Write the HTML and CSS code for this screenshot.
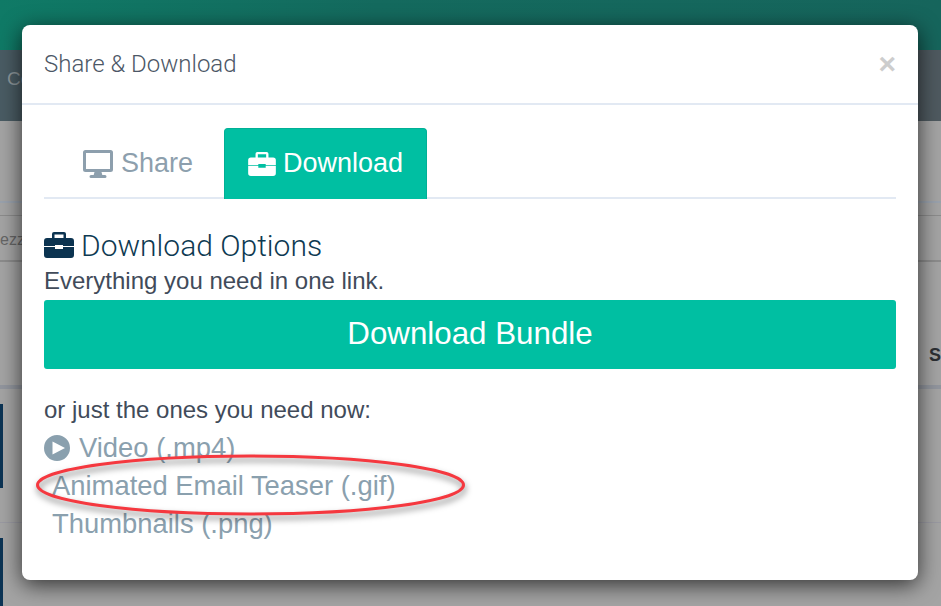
FILE: index.html
```html
<!DOCTYPE html>
<html>
    <head>
        <title>Share &amp; Download</title>
        <link rel="stylesheet" href="styles.css">
    </head>
    <body>
      <div class="page">
        <div class="topbar"></div>
        <div class="subbar">Co</div>
        <div class="search-row"><div class="search-box">ezz</div></div>
        <div class="table-head">S</div>
        <div class="table-row"><span class="thumb"></span></div>
        <div class="table-row last"><span class="thumb"></span></div>
      </div>

      <div class="modal">
        <header class="modal-header">
          <span class="modal-title">Share &amp; Download</span>
          <span class="modal-close">&times;</span>
        </header>
        <div class="modal-body">
          <nav class="tabs">
            <a href="#" class="tab">
              <svg class="tab-icon" width="30" height="28" viewBox="0 0 30 28"><path fill-rule="evenodd" d="M2.500 0h25A2.500 2.500 0 0 1 30 2.500v17a2.500 2.500 0 0 1-2.500 2.500H18.500l.8 3h2.700a1.500 1.500 0 0 1 0 3H8a1.500 1.500 0 0 1 0-3h2.700l.8-3h-9A2.500 2.500 0 0 1 0 19.500v-17A2.500 2.500 0 0 1 2.500 0zM3 3v16h24V3z"/></svg>
              Share
            </a>
            <a href="#" class="tab active">
              <svg class="tab-icon" width="28" height="24" viewBox="0 0 30 26"><path d="M10 0h10a2 2 0 0 1 2 2v4h5a3 3 0 0 1 3 3v5H19v-1H11v1H0V9a3 3 0 0 1 3-3h5V2a2 2 0 0 1 2-2zm.5 2.500V6h9V2.500zM0 15h11v2h8v-2h11v8a3 3 0 0 1-3 3H3a3 3 0 0 1-3-3z"/></svg>
              Download
            </a>
          </nav>

          <h4 class="options-title">
            <svg class="options-icon" width="30" height="26" viewBox="0 0 30 26"><path d="M10 0h10a2 2 0 0 1 2 2v4h5a3 3 0 0 1 3 3v5H19v-1H11v1H0V9a3 3 0 0 1 3-3h5V2a2 2 0 0 1 2-2zm.5 2.500V6h9V2.500zM0 15h11v2h8v-2h11v8a3 3 0 0 1-3 3H3a3 3 0 0 1-3-3z"/></svg>
            Download Options
          </h4>
          <p class="options-text">Everything you need in one link.</p>
          <a href="#" class="bundle-btn">Download Bundle</a>

          <p class="options-sub">or just the ones you need now:</p>
          <ul class="file-list">
            <li>
              <svg class="play-icon" width="26" height="26" viewBox="0 0 26 26"><path fill-rule="evenodd" d="M13 0a13 13 0 1 1 0 26a13 13 0 0 1 0-26zM8.500 6.500v13L21 13z"/></svg>
              <a href="#">Video (.mp4)</a>
            </li>
            <li class="indent"><a href="#">Animated Email Teaser (.gif)</a></li>
            <li class="indent"><a href="#">Thumbnails (.png)</a></li>
          </ul>
        </div>
      </div>

      <svg class="callout" width="941" height="606" viewBox="0 0 941 606">
        <ellipse cx="250.500" cy="485" rx="213" ry="29" />
      </svg>
    </body>
</html>
```

FILE: styles.css
```css
html, body {
  margin: 0;
  height: 100%;
  overflow: hidden;
}

body {
  font-family: "Liberation Sans", Arial, sans-serif;
  background-color: #a4a4a4;
}

.page {
  height: 606px;
  overflow: hidden;
  background-color: #a4a4a4;
  color: #333;
}

.topbar {
  height: 50px;
  background: linear-gradient(90deg, #0f7a66, #146a5e 40%, #16655c);
}

.subbar {
  height: 71px;
  padding: 18px 0 0 7px;
  box-sizing: border-box;
  background: linear-gradient(90deg, #4a5c64, #4f5a60);
  color: #8d979b;
  font-size: 19px;
}

.search-row {
  height: 61px;
  margin-top: 80px;
  padding-top: 12px;
  box-sizing: border-box;
  border-top: 2px solid #9aa2ad;
}

.search-box {
  height: 47px;
  padding-top: 15px;
  box-sizing: border-box;
  border-top: 1px solid #8c8c8c;
  border-bottom: 2px solid #8c8c8c;
  color: #666;
  font-size: 16px;
}

.table-head {
  height: 127px;
  padding-top: 83px;
  box-sizing: border-box;
  border-bottom: 4px solid #92969e;
  text-align: right;
  font-size: 18px;
  font-weight: bold;
  color: #2c2f33;
}

.table-row {
  height: 134px;
  padding-top: 15px;
  box-sizing: border-box;
  border-bottom: 1px solid #9a9aa2;
}

.table-row.last {
  height: 83px;
  border-bottom: none;
}

.thumb {
  display: block;
  width: 3px;
  height: 84px;
  background-color: #0b3354;
}

.modal {
  position: absolute;
  top: 25px;
  left: 22px;
  width: 896px;
  height: 555px;
  background-color: #fff;
  border-radius: 8px;
  box-shadow: 0 5px 22px rgba(0, 0, 0, 0.7);
}

.modal-header {
  display: flex;
  justify-content: space-between;
  align-items: center;
  height: 78px;
  padding: 0 22px;
  border-bottom: 2px solid #e2e9f3;
}

.modal-title {
  font-family: Roboto, sans-serif;
  font-weight: 300;
  font-size: 24px;
  color: #4c5766;
}

.modal-close {
  font-family: "Liberation Sans", sans-serif;
  font-weight: bold;
  font-size: 30px;
  color: #cdcdcd;
}

.modal-body {
  padding: 23px 22px 0;
}

.tabs {
  display: flex;
  height: 69px;
  border-bottom: 2px solid #e2e9f3;
}

.tab {
  display: flex;
  align-items: center;
  gap: 8px;
  height: 71px;
  flex-shrink: 0;
  padding: 0 31px 0 39px;
  box-sizing: border-box;
  color: #8d9fad;
  font-size: 27px;
  text-decoration: none;
  border-radius: 4px 4px 0 0;
}

.tab-icon {
  fill: #8d9fad;
}

.tab.active {
  padding: 0 23px 1px;
  gap: 7px;
  color: #fff;
  background-color: #00bfa2;
  border: 1px solid #00b096;
  border-bottom: none;
}

.tab.active .tab-icon {
  fill: #fff;
}

.options-title {
  margin: 28px 0 0;
  display: flex;
  align-items: center;
  gap: 7px;
  height: 36px;
  font-family: Roboto, sans-serif;
  font-weight: 300;
  font-size: 30px;
  color: #0e3a52;
}

.options-icon {
  fill: #0b3350;
}

.options-text {
  margin: 2px 0 0;
  font-size: 24px;
  line-height: 31px;
  color: #414b5a;
}

.bundle-btn {
  display: block;
  margin-top: 4px;
  height: 69px;
  line-height: 67px;
  text-align: center;
  font-size: 31.300px;
  color: #fff;
  text-decoration: none;
  background-color: #00bfa2;
  border-radius: 3px;
}

.options-sub {
  margin: 25px 0 0;
  font-size: 24px;
  line-height: 31px;
  color: #414b5a;
}

.file-list {
  list-style: none;
  margin: 4px 0 0;
  padding: 0;
  font-size: 27.400px;
  line-height: 38px;
}

.file-list li {
  display: flex;
  align-items: center;
  gap: 9px;
  height: 38px;
}

.file-list li.indent {
  padding-left: 8px;
}

.file-list a {
  color: #8aa0ae;
  text-decoration: none;
}

.play-icon {
  fill: #8aa0ae;
}

.callout {
  position: absolute;
  top: 0;
  left: 0;
  pointer-events: none;
  filter: drop-shadow(1px 4px 3px rgba(0, 0, 0, 0.5));
}

.callout ellipse {
  fill: none;
  stroke: #f5383f;
  stroke-width: 3;
}
```
